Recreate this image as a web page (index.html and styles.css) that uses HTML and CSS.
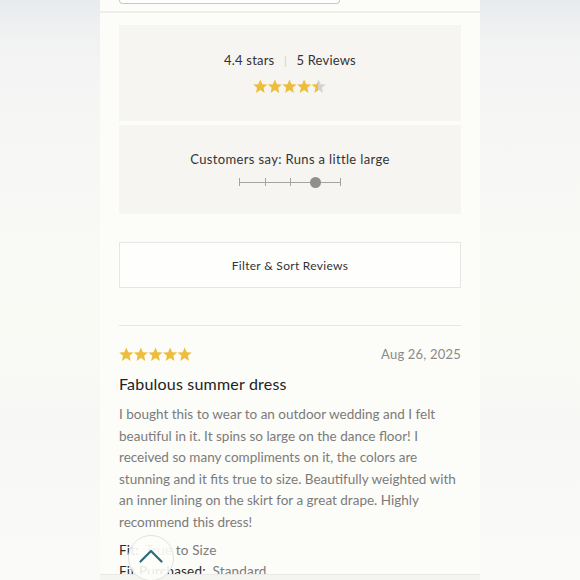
FILE: index.html
```html
<!DOCTYPE html>
<html lang="en">
<head>
<meta charset="utf-8">
<title>Reviews</title>
<link rel="stylesheet" href="styles.css">
</head>
<body>
<div class="page">
  <main class="column">
    <div class="topbox"></div>
    <div class="rule"></div>

    <section class="card summary">
      <p class="summary-text">4.4 stars <span class="sep">|</span> 5 Reviews</p>
      <svg class="stars" width="74" height="15" viewBox="0 0 74 15" aria-label="4.4 stars">
        <defs>
          <polygon id="st" points="7.3,0.4 9.3,5.2 14.4,5.5 10.5,8.8 11.7,13.9 7.3,11.1 2.9,13.9 4.1,8.8 0.2,5.5 5.3,5.2"/>
          <linearGradient id="part" x1="0" x2="1" y1="0" y2="0">
            <stop offset="0.45" stop-color="#edbd3c"/>
            <stop offset="0.45" stop-color="#d4d3d0"/>
          </linearGradient>
        </defs>
        <use href="#st" x="0" fill="#edbd3c"/>
        <use href="#st" x="14.6" fill="#edbd3c"/>
        <use href="#st" x="29.2" fill="#edbd3c"/>
        <use href="#st" x="43.8" fill="#edbd3c"/>
        <use href="#st" x="58.4" fill="url(#part)"/>
      </svg>
    </section>

    <section class="card fit">
      <p class="fit-text">Customers say: Runs a little large</p>
      <div class="scale">
        <span class="tick t0"></span>
        <span class="tick t1"></span>
        <span class="tick t2"></span>
        <span class="tick t4"></span>
        <span class="dot"></span>
      </div>
    </section>

    <button class="filter">Filter &amp; Sort Reviews</button>

    <div class="divider"></div>

    <article class="review">
      <div class="review-head">
        <svg class="stars" width="74" height="15" viewBox="0 0 74 15" aria-label="5 stars">
          <defs>
            <polygon id="st2" points="7.3,0.4 9.3,5.2 14.4,5.5 10.5,8.8 11.7,13.9 7.3,11.1 2.9,13.9 4.1,8.8 0.2,5.5 5.3,5.2"/>
          </defs>
          <use href="#st2" x="0" fill="#edbd3c"/>
          <use href="#st2" x="14.6" fill="#edbd3c"/>
          <use href="#st2" x="29.2" fill="#edbd3c"/>
          <use href="#st2" x="43.8" fill="#edbd3c"/>
          <use href="#st2" x="58.4" fill="#edbd3c"/>
        </svg>
        <span class="date">Aug 26, 2025</span>
      </div>
      <h3 class="title">Fabulous summer dress</h3>
      <p class="body">I bought this to wear to an outdoor wedding and I felt beautiful in it. It spins so large on the dance floor! I received so many compliments on it, the colors are stunning and it fits true to size. Beautifully weighted with an inner lining on the skirt for a great drape. Highly recommend this dress!</p>
      <p class="meta"><span class="label">Fit:</span> True to Size</p>
      <p class="meta"><span class="label">Fit Purchased:</span> Standard</p>
    </article>

    <div class="bottombar"></div>
    <button class="totop" aria-label="Back to top">
      <svg width="24" height="14" viewBox="0 0 24 14"><polyline points="1.5,12.5 12,2 22.5,12.5" fill="none" stroke="#2d6a78" stroke-width="2.2" stroke-linecap="round" stroke-linejoin="round"/></svg>
    </button>
  </main>
</div>
</body>
</html>
```
FILE: styles.css
```css
* { box-sizing: border-box; }
html, body { margin: 0; padding: 0; height: 580px; overflow: hidden; }
body {
  background: linear-gradient(180deg, #e8ebee 0px, #f1f2f2 40px, #f6f7f5 120px, #fafaf5 320px, #f7f7f5 420px, #fafaf8 580px);
  font-family: Lato, "Open Sans", sans-serif;
  color: #333;
}
.page { display: flex; justify-content: center; height: 580px; }
.column {
  position: relative;
  width: 380px;
  height: 580px;
  background: #fcfcf9;
  display: flex;
  flex-direction: column;
  overflow: hidden;
}
.column > * { flex-shrink: 0; }
.topbox {
  margin-left: 19px;
  width: 221px;
  height: 4px;
  border: 1px solid #c9c9c7;
  border-top: none;
  border-radius: 0 0 6px 6px;
  background: #fff;
}
.rule { margin-top: 7px; height: 2px; background: #eeeeeb; }
.card {
  margin: 0 19px;
  background: #f6f5f2;
  display: flex;
  flex-direction: column;
  align-items: center;
}
.summary { margin-top: 12px; height: 96px; padding-top: 25px; }
.summary-text { margin: 0; font-size: 13px; line-height: 20px; letter-spacing: 0.2px; color: #333; }
.sep { color: #cfcfcc; margin: 0 6px; font-size: 11px; }
.summary .stars { margin-top: 8px; display: block; }
.fit { margin-top: 4px; height: 89px; padding-top: 24px; }
.fit-text { margin: 0; font-size: 13px; line-height: 20px; letter-spacing: 0.35px; color: #333; }
.scale { position: relative; margin-top: 7px; width: 102px; height: 12px; }
.scale::before {
  content: ""; position: absolute; left: 0; right: 0; top: 5.5px; height: 1px; background: #a3a3a1;
}
.tick { position: absolute; top: 2px; width: 1px; height: 8px; background: #a3a3a1; }
.t0 { left: 0; }
.t1 { left: 25.5px; }
.t2 { left: 50.5px; }
.t4 { left: 101px; }
.dot {
  position: absolute; left: 70.5px; top: 0.5px; width: 11px; height: 11px; border-radius: 50%; background: #8f8f8e;
}
.filter {
  margin: 28px 19px 0;
  height: 46px;
  background: #fefefd;
  border: 1px solid #e6e6e3;
  font-family: Lato, sans-serif;
  font-size: 12px;
  letter-spacing: 0.3px;
  color: #333;
  padding: 0;
}
.divider { margin: 37px 19px 0; height: 1px; background: #e6e6e3; }
.review { margin: 20px 19px 0; }
.review-head { display: flex; justify-content: space-between; align-items: center; height: 16px; }
.review-head .stars { display: block; }
.date { font-size: 13px; color: #8a8a88; letter-spacing: 0.2px; }
.title { margin: 11px 0 0; font-size: 16px; line-height: 22px; font-weight: 400; color: #222; letter-spacing: 0.2px; }
.body { margin: 9px 0 0; font-size: 13.5px; line-height: 21.6px; color: #7b7b79; }
.meta { margin: 6px 0 0; font-size: 13.5px; line-height: 21.6px; color: #7b7b79; letter-spacing: 0.2px; }
.meta + .meta { margin-top: 0; }
.label { color: #2b2b2b; margin-right: 3px; }
.bottombar {
  position: absolute; left: 0; right: 0; bottom: 0; height: 6px;
  background: #f4f4f1; border-top: 1px solid #e8e8e5;
}
.totop {
  position: absolute; left: 28px; top: 535px;
  width: 46px; height: 46px; border-radius: 50%;
  border: 1px solid #e2e2de;
  background: rgba(253, 253, 250, 0.9);
  display: flex; align-items: center; justify-content: center;
  padding: 0 0 4px;
}
```
